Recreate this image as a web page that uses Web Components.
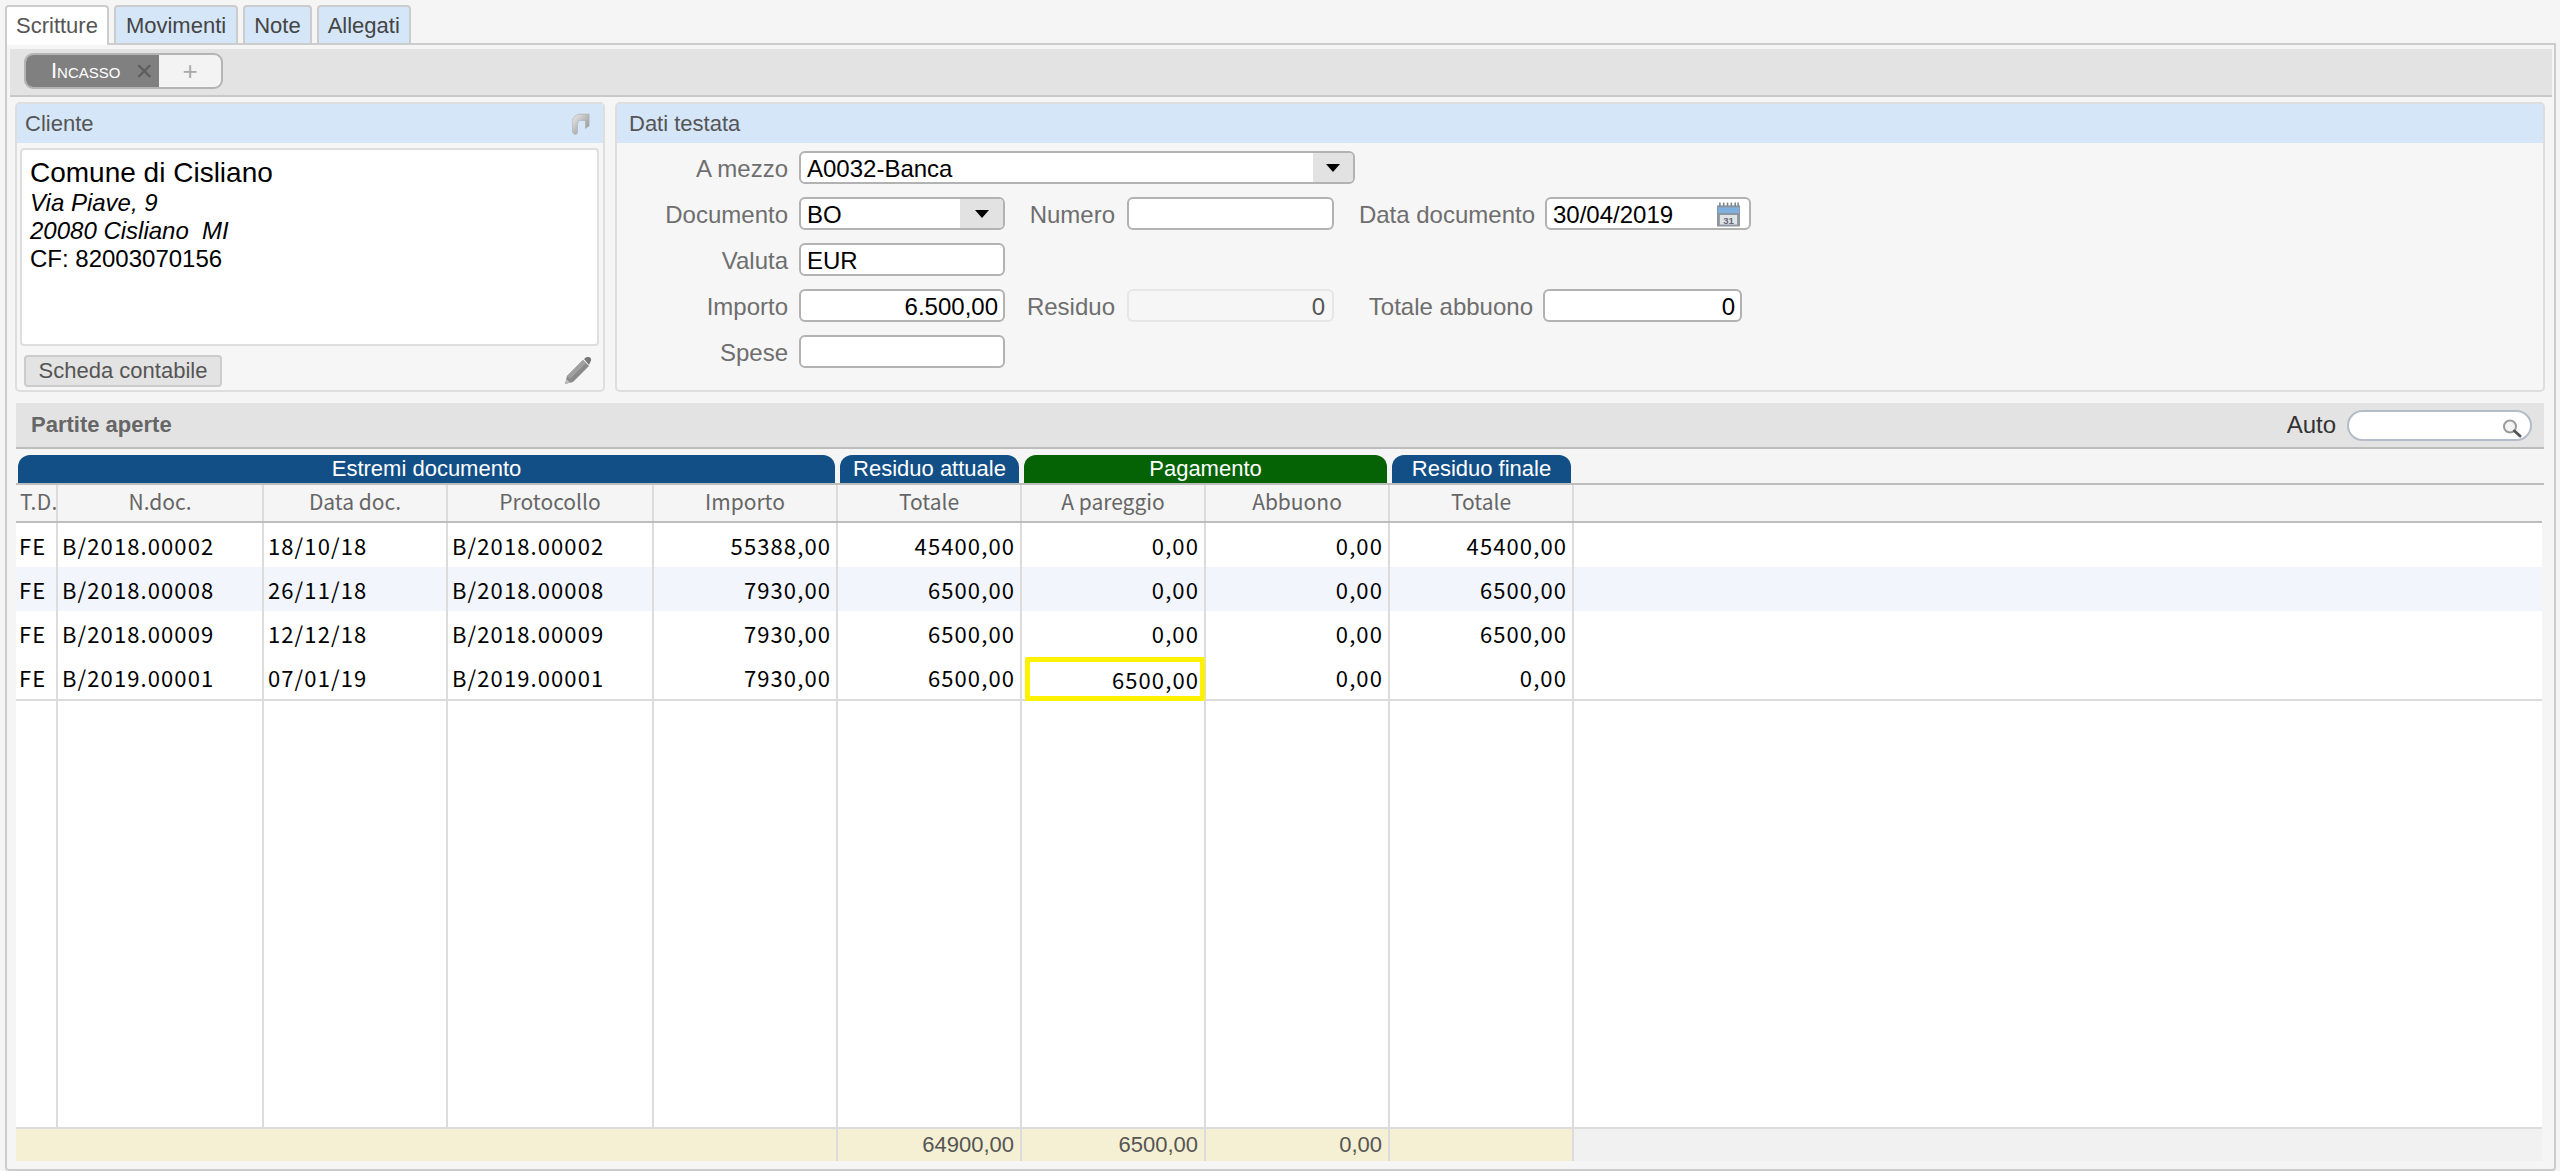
<!DOCTYPE html>
<html lang="it"><head><meta charset="utf-8"><title>Scritture</title>
<style>
html,body{margin:0;padding:0;height:100%;overflow:hidden;background:#f5f5f5;font-family:"Liberation Sans",Arial,sans-serif}
x-app{height:1171px}
</style></head><body>
<x-app>
  <x-tabs>
    <x-tab active>Scritture</x-tab><x-tab style="padding:0 10px">Movimenti</x-tab><x-tab>Note</x-tab><x-tab>Allegati</x-tab>
  </x-tabs>
  <x-tabpanel>
    <x-toolbar><x-segment></x-segment></x-toolbar>
    <x-cards>
      <x-card title="Cliente" pad="8" style="width:590px;flex:none">
        <svg slot="icon" width="18" height="22" viewBox="0 0 20 24"><defs><linearGradient id="g" x1="0" y1="0" x2="1" y2="1"><stop offset="0" stop-color="#eee"/><stop offset="1" stop-color="#888"/></linearGradient></defs><path d="M8 1h11v13l-4 3V8H10C7 8 6 10 6 13v9l-2 2-3-2-1-4v-6C0 6 3 2 8 1z" fill="url(#g)" stroke="#a5a5a5" stroke-width=".6"/></svg>
        <x-client></x-client>
      </x-card>
      <x-card title="Dati testata" pad="12" style="flex:1">
        <x-form>
          <x-row><x-field label="A mezzo" lw="171" gap="11" w="556" value="A0032-Banca" kind="select" btn="40"></x-field></x-row>
          <x-row><x-field label="Documento" lw="171" gap="11" w="206" value="BO" kind="select" btn="43"></x-field><x-field label="Numero" lw="110" gap="12" w="207"></x-field><x-field label="Data documento" lw="201" gap="10" w="206" value="30/04/2019" kind="date"></x-field></x-row>
          <x-row><x-field label="Valuta" lw="171" gap="11" w="206" value="EUR"></x-field></x-row>
          <x-row><x-field label="Importo" lw="171" gap="11" w="206" value="6.500,00" kind="num"></x-field><x-field label="Residuo" lw="110" gap="12" w="207" value="0" kind="off"></x-field><x-field label="Totale abbuono" lw="199" gap="10" w="199" value="0" kind="num"></x-field></x-row>
          <x-row><x-field label="Spese" lw="171" gap="11" w="206"></x-field></x-row>
        </x-form>
      </x-card>
    </x-cards>
    <x-partite></x-partite>
  </x-tabpanel>
</x-app>
<script>
function def(name,css,html,init){
  customElements.define(name,class extends HTMLElement{
    constructor(){super();this.attachShadow({mode:'open'});}
    connectedCallback(){
      const a=n=>this.getAttribute(n)||'';
      this.shadowRoot.innerHTML='<style>'+css+'</style>'+(typeof html==='function'?html(a,this):html);
      if(init)init(this.shadowRoot,this);
    }
  });
}
def('x-app',':host{display:flex;flex-direction:column;box-sizing:border-box;width:2560px;background:#f5f5f5;color:#000;font-family:"Liberation Sans",Arial,sans-serif}','<slot></slot>');
def('x-tabs',':host{display:flex;gap:5px;padding:5px 0 0 5px;height:38px;position:relative;z-index:1}','<slot></slot>');
def('x-tab',`:host{display:block;box-sizing:border-box;height:38px;padding:0 9px;border:2px solid #ccc;border-bottom:0;border-radius:4px 4px 0 0;background:#d6e6f9;color:#444;font-size:22px;line-height:38px}
:host([active]){background:#fff;height:40px;color:#555}`,'<slot></slot>');
def('x-tabpanel',':host{display:flex;flex-direction:column;box-sizing:border-box;width:2551px;margin-left:5px;flex:1;min-height:0;border:2px solid #ccc;border-radius:0 0 4px 4px;padding:4px 2px 0 3px;background:#f5f5f5}','<slot></slot>');
def('x-toolbar',':host{display:flex;align-items:flex-start;box-sizing:border-box;height:48px;background:#e3e3e3;border-bottom:2px solid #c8c8c8;padding:4px 14px}','<slot></slot>');
def('x-segment',`:host{display:flex;box-sizing:border-box;width:199px;height:36px;border:2px solid #b4b4b4;border-radius:9px;overflow:hidden;background:#f3f3f3}
.a{width:133px;background:#808080;color:#fff;display:flex;align-items:center;font-size:22px;font-variant:small-caps;padding-left:25px;box-sizing:border-box;gap:15px}
.x{color:#5d5d5d;font-variant:normal;font-size:30px;line-height:30px}
.p{flex:1;display:flex;align-items:center;justify-content:center;color:#aaa;font-size:26px}`,'<div class="a"><span>Incasso</span><span class="x">×</span></div><div class="p">+</div>');
def('x-cards',':host{display:flex;gap:10px;height:290px;margin:5px 7px 0 5px}','<slot></slot>');
def('x-card',`:host{display:flex;flex-direction:column;box-sizing:border-box;border:2px solid #dedede;border-radius:5px;background:#f6f6f6;overflow:hidden}
.h{flex:none;height:39px;background:#d6e6f9;color:#555;font-size:22px;display:flex;align-items:center;justify-content:space-between;padding-right:13px}
.b{flex:1;min-height:0;display:flex;flex-direction:column}`,a=>`<div class="h" style="padding-left:${a('pad')}px"><span>${a('title')}</span><slot name="icon"></slot></div><div class="b"><slot></slot></div>`);
const pencil='<svg width="28" height="28" viewBox="0 0 28 28"><path d="M1 27l2-8L19 3l6 6L9 25z" fill="#8a8a8a"/><path d="M3 19L19 3l3 3L6 22z" fill="#a0a0a0"/><path d="M20 2l2-1.500a3 3 0 0 1 4 0 3 3 0 0 1 .5 4L25 8z" fill="#777"/><path d="M1 27l1.500-5 3.500 3.500z" fill="#bbb"/></svg>';
def('x-client',`:host{display:flex;flex-direction:column;flex:1}
.t{box-sizing:border-box;height:198px;margin:5px 4px 0 3px;background:#fff;border:2px solid #dedede;border-radius:4px;padding:6px 8px;font-size:24px;line-height:28px;color:#000}
.n{font-size:28px;line-height:33px}
i{display:block}
.f{display:flex;justify-content:space-between;align-items:center;margin:9px 11px 0 7px}
.btn{box-sizing:border-box;width:198px;height:32px;border:2px solid #ccc;border-radius:4px;background:#e3e3e3;color:#555;font-size:22px;line-height:28px;text-align:center}
svg{display:block}`,'<div class="t"><div class="n">Comune di Cisliano</div><i>Via Piave, 9</i><i>20080 Cisliano&nbsp; MI</i><div>CF: 82003070156</div></div><div class="f"><div class="btn">Scheda contabile</div>'+pencil+'</div>');
def('x-form',':host{display:flex;flex-direction:column;gap:13px;padding-top:8px}','<slot></slot>');
def('x-row',':host{display:flex;height:33px}','<slot></slot>');
const cal='<svg width="23" height="25" viewBox="0 0 24 25" style="position:absolute;right:9px;top:3px"><rect x="0" y="3" width="24" height="22" fill="#8d969f"/><rect x="1" y="5" width="22" height="6" fill="#7db0df"/><path d="M3 0v4M7 0v4M11 0v4M15 0v4M19 0v4M22 0v4" stroke="#7a838c" stroke-width="1.600"/><rect x="3" y="13" width="18" height="10" fill="#dfe3e6"/><text x="12" y="22" font-family="Liberation Sans" font-size="10" font-weight="700" text-anchor="middle" fill="#667">31</text></svg>';
def('x-field',`:host{display:flex;align-items:stretch}
.l{text-align:right;color:#6e6e6e;font-size:24px;line-height:35px;white-space:nowrap}
.i{position:relative;box-sizing:border-box;background:#fff;border:2px solid #b2b2b2;border-radius:6px;font-size:24px;line-height:31px;padding:0 6px;color:#000;white-space:nowrap;overflow:hidden}
.num{text-align:right;padding-right:5px}
.off{text-align:right;background:#f6f6f6;border-color:#e6e6e6;color:#555;padding-right:7px}
.b{position:absolute;right:0;top:0;bottom:0;background:#e2e2e2;display:flex;align-items:center;justify-content:center}
.b::after{content:"";border:7px solid transparent;border-top:8px solid #000;border-bottom:0}`,a=>{
  const k=a('kind');
  return `<div class="l" style="width:${a('lw')}px;margin-right:${a('gap')}px">${a('label')}</div><div class="i ${k}" style="width:${a('w')}px">${a('value')}${k==='select'?`<div class="b" style="width:${a('btn')}px"></div>`:''}${k==='date'?cal:''}</div>`;
});
const cols='42px 206px 184px 206px repeat(5,184px) 1fr';
const groups=[['Estremi documento',5,'#134f87'],['Residuo attuale',1,'#134f87'],['Pagamento',2,'#056305'],['Residuo finale',1,'#134f87']];
const heads=['T.D.','N.doc.','Data doc.','Protocollo','Importo','Totale','A pareggio','Abbuono','Totale'];
const rows=[
['FE','B/2018.00002','18/10/18','B/2018.00002','55388,00','45400,00','0,00','0,00','45400,00'],
['FE','B/2018.00008','26/11/18','B/2018.00008','7930,00','6500,00','0,00','0,00','6500,00'],
['FE','B/2018.00009','12/12/18','B/2018.00009','7930,00','6500,00','0,00','0,00','6500,00'],
['FE','B/2019.00001','07/01/19','B/2019.00001','7930,00','6500,00','6500,00','0,00','0,00']];
const search='<svg width="20" height="19" viewBox="0 0 20 19" style="position:absolute;right:8px;top:7px"><circle cx="8" cy="7.500" r="6" fill="#f4f4f4" stroke="#9a9a9a" stroke-width="2"/><path d="M12.500 12l5.500 5" stroke="#555" stroke-width="3" stroke-linecap="round"/></svg>';
const mono='"Noto Sans CJK JP","Liberation Sans",sans-serif';
def('x-partite',`:host{display:flex;flex-direction:column;flex:1;min-height:0;margin:11px 8px 8px 6px;width:2528px}
.hd{flex:none;box-sizing:border-box;height:46px;background:#e3e3e3;border-bottom:2px solid #bdbdbd;display:flex;align-items:center;justify-content:space-between;padding:0 12px 0 15px;color:#666;font-size:22px;font-weight:700}
.au{display:flex;align-items:center;gap:11px;font-weight:400;color:#333;font-size:24px}
.se{position:relative;box-sizing:border-box;width:185px;height:31px;border:2px solid #b3bcc8;border-radius:16px;background:#fff}
.g{flex:none;box-sizing:border-box;height:36px;border-bottom:2px solid #bdbdbd;display:grid;grid-template-columns:${cols};padding-top:6px;background:#f5f5f5}
.g>div{background:var(--c);color:#fff;text-align:center;font-size:22px;line-height:28px;border-radius:12px 12px 0 0;margin:0 3px 0 2px;height:28px}
.t{flex:1;min-height:0;width:2526px;display:flex;flex-direction:column;background:#fff;font-family:${mono}}
.r{display:grid;grid-template-columns:${cols};flex:none}
.r>div{box-sizing:border-box;border-right:2px solid #dcdcdc;white-space:nowrap;position:relative}
.r>div:last-child{border-right:0}
.ch{box-sizing:border-box;height:38px;background:#f5f5f5;border-bottom:2px solid #bdbdbd}
.ch>div{text-align:center;color:#666;font-size:21px;letter-spacing:0;line-height:33px;overflow:hidden}
.ch>div:first-child{text-align:left;padding-left:4px;letter-spacing:.4px}
.d{height:44px;font-size:22px;letter-spacing:1.100px;line-height:44px;color:#000}
.d>div{padding:0 5px 0 4px}
.d>div:nth-child(1){padding-left:3px}
.d>div:nth-child(n+5){text-align:right}
.alt{background:#f2f5fb}
.e{height:2px;flex:none;background:#dcdcdc}
.fill{flex:1;min-height:0}
.fill>div{height:100%}
.cell{position:absolute;left:3px;right:-1px;top:2px;bottom:-2px;border:5px solid #fff200;border-radius:2px;box-sizing:border-box;z-index:1;padding:0 1px;text-align:right;background:#fff;line-height:34px}
.ft{height:32px;flex:none;background:#f1f1f1;font-size:22px;line-height:32px;color:#555;font-family:"Liberation Sans",sans-serif}
.ft>div{background:#f5efd3;text-align:right;padding-right:6px;border-color:#dcdcdc}
.ft>div:last-child{background:#f1f1f1}
.ft .w{grid-column:span 5}`,()=>{
  let h='<div class="hd"><span>Partite aperte</span><div class="au"><span>Auto</span><div class="se">'+search+'</div></div></div>';
  h+='<div class="g">'+groups.map(g=>`<div style="grid-column:span ${g[1]};--c:${g[2]}">${g[0]}</div>`).join('')+'</div>';
  h+='<div class="t"><div class="r ch">'+heads.map(t=>`<div>${t}</div>`).join('')+'<div></div></div>';
  rows.forEach((r,i)=>{
    h+=`<div class="r d${i===1?' alt':''}">`+r.map((c,j)=>i===3&&j===6?`<div><div class="cell">${c}</div></div>`:`<div>${c}</div>`).join('')+'<div></div></div>';
  });
  h+='<div class="e"></div><div class="r fill">'+heads.map(()=>'<div></div>').join('')+'<div></div></div><div class="e"></div>';
  h+='<div class="r ft"><div class="w"></div><div>64900,00</div><div>6500,00</div><div>0,00</div><div></div><div></div></div></div>';
  return h;
});
</script>
</body></html>
